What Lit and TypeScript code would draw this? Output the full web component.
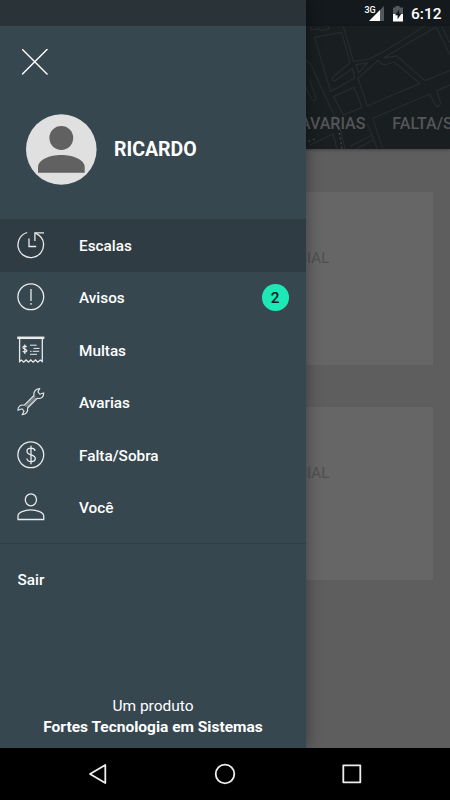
import { LitElement, html, css, svg } from "lit";
import { customElement, property } from "lit/decorators.js";

const ICONS: Record<string, unknown> = {
  clock: svg`<path d="M10.2 1.500A12.800 12.800 0 1 0 26.500 12.500C26.300 8 23 4.500 18.500 2.200"/><path d="M12 7.500v8h7.200M17.900 10V1.800H27"/>`,
  alert: svg`<circle cx="13.8" cy="13.8" r="12.9"/><path d="M14 6v12M14 20v1.800"/>`,
  receipt: svg`<path d="M.9 1.200h25.800v1.200H.9z" fill="#aeb7bb"/><path d="M2.600 3v22.500l1.800-1.500 2.300 2.200 2.400-2.200 2.300 2.200 2.400-2.200 2.300 2.200 2.400-2.200 2.300 2.200 2.400-2.200 2.100 1.500V3"/><path d="M13 9.200h6.700M16.500 12.400h6M13 15.300h1.500M15.700 15.300h6.500M13 18.300h7" stroke-width="1"/><path d="M9.600 11c-.6-1.300-3.700-1.100-3.700.5 0 1.900 4 1.300 4 3.300 0 1.600-3.400 1.700-4.100.2M7.800 8.500v9.500" stroke-width="1.200"/>`,
  wrench: svg`<path d="M7.300 17.200L17 7.500C16.300 3.500 18.700.8 22.600.6L20.900 4l2 2.200 3.800-1.300c.3 3.700-2.400 6.200-6.500 5.500l-9.600 9.600c.8 3.900-1.600 6.400-5.300 6.600L7 23l-2-2.200-4 1.400c-.3-3.500 2.300-5.900 6.300-5z" stroke-width="1.100"/><path d="M8.200 18.300L18.300 8.300M9.700 19L19 9.700" stroke-width=".7"/>`,
  dollar: svg`<circle cx="13.8" cy="13.8" r="12.9"/><path d="M18 9.800c-.6-3.600-8-3.500-8 .4 0 4.600 8.300 2.700 8.300 7.300 0 4-7.700 4.400-8.500 0M14 4.700v18.500"/>`,
  person: svg`<ellipse cx="13.900" cy="6.800" rx="5.600" ry="6"/><path d="M1 26.500V23c0-3.600 6.600-6.200 12.800-6.200S26.700 19.400 26.700 23v3.500z"/>`,
};

@customElement("menu-item")
class MenuItem extends LitElement {
  @property() icon = "";
  @property() label = "";
  @property() badge = "";
  @property({ type: Boolean }) active = false;

  static styles = css`
    :host { display: flex; align-items: center; height: 52.5px; padding: 0 17.500px 0 17px; box-sizing: border-box; }
    :host([active]) { background: #303c43; }
    .icon { width: 28px; height: 28px; flex: none; margin-top: -1px; fill: none; stroke: #e8ebec; stroke-width: 1.3; overflow: visible; }
    .label { margin-left: 34px; flex: 1; padding-top: 1.500px; }
    .badge { width: 26.600px; height: 26.600px; border-radius: 50%; background: #1de9b6; color: #10191b; display: flex; align-items: center; justify-content: center; box-sizing: border-box; padding-top: 1px; }
  `;

  render() {
    return html`<svg class="icon" viewBox="0 0 28 28">${ICONS[this.icon]}</svg>
      <span class="label">${this.label}</span>
      ${this.badge ? html`<span class="badge">${this.badge}</span>` : ""}`;
  }
}

@customElement("app-root")
class AppRoot extends LitElement {
  static styles = css`
    :host { display: block; font-family: Roboto, sans-serif; font-size: 15.3px; line-height: 21px; }
    .screen { position: relative; width: 450px; height: 800px; overflow: hidden; display: flex; flex-direction: column; background: #5e5e5e; }
    .status { height: 26px; flex: none; box-sizing: border-box; background: #13191c; display: flex; justify-content: flex-end; align-items: center; padding: 2px 8.500px 0 0; color: #fff; font-size: 15.500px; font-weight: 500; }
    .signal { width: 20px; height: 18px; margin: -2px 8px 0 0; overflow: visible; }
    .net { font-size: 9px; font-weight: 500; fill: #fff; }
    .battery { width: 12px; height: 17px; margin: -2px 7px 0 0; }
    .header { position: relative; height: 123px; flex: none; background: #191e21; display: flex; justify-content: flex-end; align-items: flex-end; box-shadow: 0 1px 3px rgba(0,0,0,.3); }
    .map { position: absolute; right: 0; top: 0; width: 144px; height: 123px; fill: none; stroke: #262b2e; stroke-width: 3.800; stroke-linejoin: round; }
    .tabs { position: relative; display: flex; gap: 27px; width: 150px; height: 51px; align-items: center; color: #545657; font-size: 16px; font-weight: 500; white-space: nowrap; }
    .tab:first-child { width: 66px; display: flex; justify-content: flex-end; }
    .cards { flex: 1; display: flex; flex-direction: column; gap: 42.500px; padding: 42.500px 17.500px 0; }
    .card { height: 173px; background: #666; box-sizing: border-box; padding: 56px 103px 0 0; text-align: right; color: #505050; }
    .drawer { position: absolute; left: 0; top: 0; width: 306px; height: 748px; background: #37474f; color: #fff; box-shadow: 0 0 14px rgba(0,0,0,.42); display: flex; flex-direction: column; }
    .strip { height: 26px; flex: none; background: #293338; }
    .close { width: 26px; height: 26px; margin: 23px 0 0 22px; stroke: #fff; stroke-width: 1.4; flex: none; }
    .profile { display: flex; align-items: center; height: 71px; margin: 39px 0 34px 26px; flex: none; gap: 17px; font-size: 19.500px; font-weight: 700; }
    .avatar { width: 71px; height: 71px; }
    .menu { display: flex; flex-direction: column; font-weight: 500; }
    .rule { height: 1px; background: #303d44; margin-top: 8.500px; flex: none; }
    .exit { margin: 26px 0 0 17.500px; font-weight: 500; }
    .foot { margin-top: auto; padding: 0 0 10px; text-align: center; font-size: 15.500px; }
    .brand { font-weight: 700; }
    .nav { height: 52px; flex: none; background: #000; display: flex; justify-content: center; gap: 103px; align-items: center; }
    .key { width: 24px; height: 24px; fill: none; stroke: #eee; stroke-width: 1.8; stroke-linejoin: round; }
  `;

  render() {
    return html`<div class="screen">
      <div class="status">
        <svg class="signal" viewBox="0 0 20 18"><path d="M20 2v15H15V7z" fill="#53595c"/><path d="M16 6v11H5z" fill="#fff"/><text class="net" x="0.500" y="8.500">3G</text></svg>
        <svg class="battery" viewBox="0 0 12 17"><path d="M3.500 1h4v1.500H11V9H1V2.500h2.500z" fill="#53595c"/><path d="M1 9h10v7.500H1z" fill="#fff"/><path d="M7.200 4.300L3 10.200h2.600v4L9.500 8.400H7.200z" fill="#13191c"/></svg>
        <span>6:12</span>
      </div>
      <div class="header">
        <svg class="map" viewBox="48 78 432 369">
          <path d="M60 80l5 10 22-4 5 6 26-6-4-8M74 112L155 97L180 188L132 228Q120 238 133 243L188 206L194 234L122 275z"/>
          <path d="M160 78L190 184L235 178L275 158L405 78M198 194L232 189L206 218zM280 174L320 168L405 242L480 212M265 180Q270 196 290 193L312 186L390 250L232 318L204 235L265 180M280 174L436 82"/>
          <path d="M130 290L192 262L216 322L160 345zM48 180L62 192L150 385L165 446M248 355L420 282L436 315Q446 326 452 310L440 272L480 255M248 355L278 446M232 372L262 446M48 262L64 298Q72 308 78 296L58 235M60 435L130 402L140 446M180 440L245 405M200 446L250 420M438 80L480 165M455 80L480 130"/>
          <path d="M55 424l22-8M146 385l10 62" stroke="#454a42" stroke-dasharray="6 8"/>
        </svg>
        <div class="tabs"><span class="tab">AVARIAS</span><span class="tab">FALTA/SOBRA</span></div>
      </div>
      <div class="cards"><div class="card">FOLGA ESPECIAL</div><div class="card">FOLGA ESPECIAL</div></div>
      <div class="nav">
        <svg class="key" viewBox="0 0 24 24"><path d="M4 12L19.300 3v18z"/></svg>
        <svg class="key" viewBox="0 0 24 24"><circle cx="12" cy="12" r="9.300"/></svg>
        <svg class="key" viewBox="0 0 24 24"><rect x="3.300" y="3.300" width="17" height="17"/></svg>
      </div>
      <div class="drawer">
        <div class="strip"></div>
        <svg class="close" viewBox="0 0 26 26"><path d="M0 0L25.500 25.500M25.500 0L0 25.500"/></svg>
        <div class="profile">
          <svg class="avatar" viewBox="0 0 71 71"><circle cx="35.300" cy="35.500" r="35.300" fill="#e0e0e0"/><circle cx="35.300" cy="24" r="11.900" fill="#616161"/><path d="M12 58.700v-5.500C12 45.500 24 41 35.300 41S58.700 45.500 58.700 53.200v5.500z" fill="#616161"/></svg>
          <span>RICARDO</span>
        </div>
        <div class="menu">
          <menu-item icon="clock" label="Escalas" active></menu-item>
          <menu-item icon="alert" label="Avisos" badge="2"></menu-item>
          <menu-item icon="receipt" label="Multas"></menu-item>
          <menu-item icon="wrench" label="Avarias"></menu-item>
          <menu-item icon="dollar" label="Falta/Sobra"></menu-item>
          <menu-item icon="person" label="Você"></menu-item>
        </div>
        <div class="rule"></div>
        <div class="exit">Sair</div>
        <div class="foot"><div>Um produto</div><div class="brand">Fortes Tecnologia em Sistemas</div></div>
      </div>
    </div>`;
  }
}
